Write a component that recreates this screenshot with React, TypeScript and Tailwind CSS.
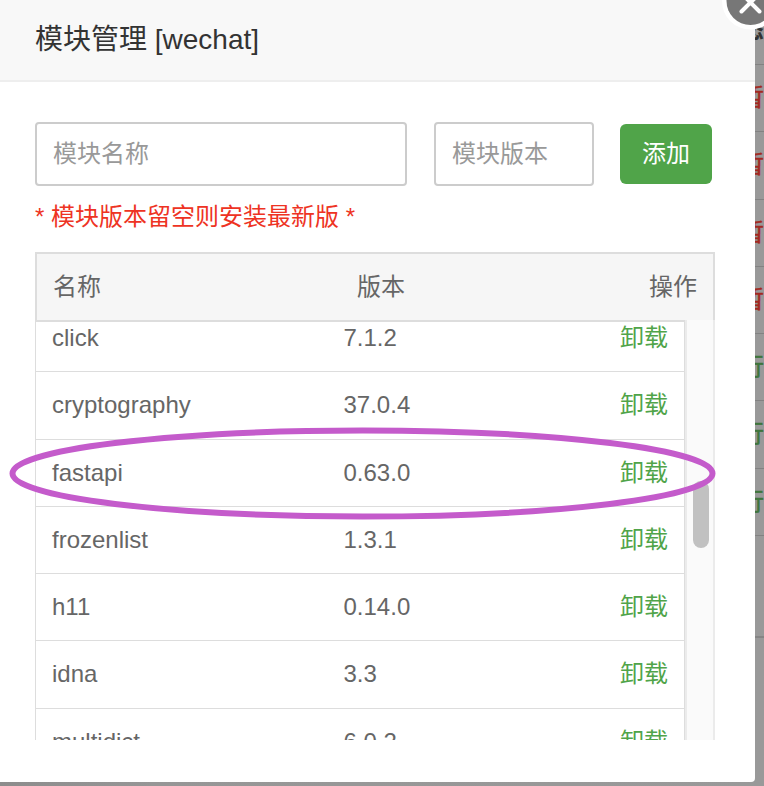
import React from 'react';

const modules = [
  { name: 'click', version: '7.1.2' },
  { name: 'cryptography', version: '37.0.4' },
  { name: 'fastapi', version: '0.63.0' },
  { name: 'frozenlist', version: '1.3.1' },
  { name: 'h11', version: '0.14.0' },
  { name: 'idna', version: '3.3' },
  { name: 'multidict', version: '6.0.2' },
];

const statuses = [
  { text: '暂', color: 'text-[#a32820]' },
  { text: '暂', color: 'text-[#a32820]' },
  { text: '暂', color: 'text-[#a32820]' },
  { text: '暂', color: 'text-[#a32820]' },
  { text: '行', color: 'text-[#3f753c]' },
  { text: '行', color: 'text-[#3f753c]' },
  { text: '行', color: 'text-[#3f753c]' },
];

// Dimmed project list that shows behind the dialog
const Backdrop = () => (
  <div className="absolute inset-0 flex flex-col items-end bg-linear-to-r from-[#8c8c8c] from-0% via-[#969696] via-20% to-[#999]">
    <div className="h-[65px] w-8 shrink-0 border-b border-[#828282] pt-[16px] pl-2 text-[24px] leading-[28px] font-bold text-[#333]">
      态
    </div>
    {statuses.map((status, index) => (
      <div
        key={index}
        className={`h-[67.25px] w-8 shrink-0 border-b border-[#828282] pl-2 text-[24px] leading-[66px] [-webkit-text-stroke:0.5px_currentColor] ${status.color}`}
      >
        {status.text}
      </div>
    ))}
    <div className="h-[102px] w-8 shrink-0 border-b-2 border-[#858585]" />
  </div>
);

const App = () => {
  return (
    <div className="relative h-[786px] w-[764px] overflow-hidden font-['Liberation_Sans','Noto_Sans_CJK_SC',sans-serif] text-[24px] text-[#666]">
      <Backdrop />

      {/* Dialog */}
      <div className="relative h-[782px] w-[755px] rounded-br-[4px] bg-white">
        <div className="h-[82px] border-b-2 border-[#eee] bg-[#f8f8f8] pl-[35px] text-[28px] leading-[80px] text-[#333]">
          模块管理 [wechat]
        </div>

        <div className="pt-10 pl-[35px]">
          <div className="flex items-center">
            <input
              className="h-16 w-[372px] rounded-[4px] border-2 border-[#ccc] px-4 placeholder:text-[#999]"
              placeholder="模块名称"
            />
            <input
              className="ml-[27px] h-16 w-40 rounded-[4px] border-2 border-[#ccc] px-4 placeholder:text-[#999]"
              placeholder="模块版本"
            />
            <button className="ml-[26px] h-[60px] w-[92px] rounded-[6px] bg-[#50a449] text-white">添加</button>
          </div>

          <div className="h-[66px] text-[#ee3323] leading-[62px]">* 模块版本留空则安装最新版 *</div>

          {/* Module table */}
          <div className="flex h-[68px] w-[680px] border-2 border-b-0 border-[#ddd] bg-[#f6f6f6] leading-[66px]">
            <div className="w-[304px] pl-4">名称</div>
            <div className="flex-1 pl-4">版本</div>
            <div className="pr-4">操作</div>
          </div>
          <div className="flex h-[420px] w-[680px] overflow-hidden">
            <div className="w-[650px] shrink-0 border-t-2 border-r border-l border-[#ddd]">
              <div className="-mt-[16.85px] h-[436px] [clip-path:inset(17px_0_0_0)]">
                {modules.map((item) => (
                  <div
                    key={item.name}
                    className="flex h-[67.25px] border-b border-[#ddd] leading-[66px]"
                  >
                    <div className="w-[291.5px] pl-4">{item.name}</div>
                    <div className="flex-1 pl-4">{item.version}</div>
                    <div className="pr-4 text-[#50a449]">卸载</div>
                  </div>
                ))}
              </div>
            </div>
            <div className="flex-1 border-r-2 border-l-2 border-[#ebebeb] bg-[#fafafa] pt-[161px] pl-[6px]">
              <div className="h-[67px] w-4 rounded-full bg-[#c1c1c1]" />
            </div>
          </div>
        </div>
      </div>

      {/* Close button */}
      <svg className="absolute top-0 right-0 h-8 w-12" viewBox="0 0 48 32" fill="none">
        <circle cx="34.5" cy="1" r="28.5" fill="#fff" />
        <circle cx="34.5" cy="1" r="24" fill="#777" />
        <path d="M25.5 11.5 43.5 -6.5M43.5 11.5 25.5 -6.5" stroke="#fff" strokeWidth="4" strokeLinecap="round" />
      </svg>

      {/* Highlight ring around the fastapi row */}
      <svg className="absolute top-[424px] left-[4px] h-[100px] w-[720px]" viewBox="0 0 720 100" fill="none">
        <ellipse cx="358.5" cy="49.5" rx="350" ry="43" stroke="#c45bcb" strokeWidth="6" />
      </svg>
    </div>
  );
};

export default App;
